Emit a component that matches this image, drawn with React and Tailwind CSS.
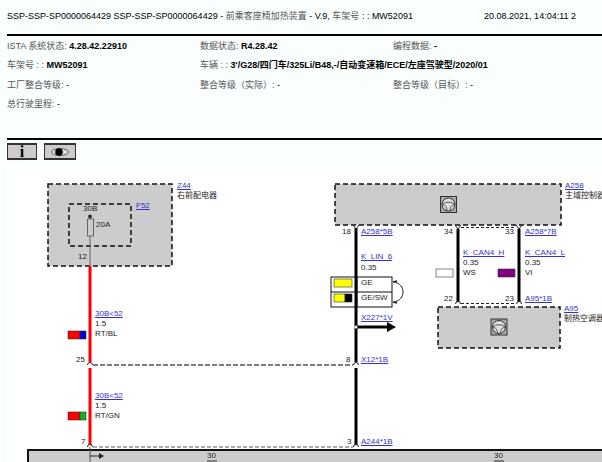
const sans = "font-['Liberation_Sans','Noto_Sans_CJK_SC',sans-serif]"

const Cjk = ({ children }) => <span className="text-[#555]">{children}</span>

const Field = ({ label, value, className = '' }) => (
    <div className={`h-[19.4px] leading-[19px] whitespace-nowrap ${className}`}>
        <Cjk>{label}</Cjk>
        {value}
    </div>
)

// one text of the wiring diagram
const Text = ({ link, children }) => (
    <span className={`text-[8px] leading-none whitespace-nowrap ${link ? 'text-[#3333cc] underline' : 'text-[#222]'}`}>
        {children}
    </span>
)

const Label = ({ className, link, children }) => (
    <div className={`absolute flex ${className}`}>
        <Text link={link}>{children}</Text>
    </div>
)

// wire name, cross-section, colour: always stacked under each other
const Stack = ({ className, link, lines }) => (
    <div className={`absolute flex flex-col items-start gap-[2px] ${className}`}>
        <Text link>{link}</Text>
        {lines.map((line) => (
            <Text key={line}>{line}</Text>
        ))}
    </div>
)

const Steering = ({ x, y }) => (
    <g transform={`translate(${x} ${y})`} fill="none" stroke="#333" strokeWidth="1">
        <rect x="-8" y="-8" width="16" height="16" fill="#aaa" />
        <circle r="6.5" fill="#ddd" />
        <path d="M-6 0 C-3 -3 3 -3 6 0 M-6 0 C-3 1 -2 2 -1.5 6 M6 0 C3 1 2 2 1.5 6" strokeWidth="0.8" />
    </g>
)

const Pin = ({ x, y }) => (
    <path d={`M${x - 2.5} ${y + 1} A2.5 2.5 0 0 1 ${x + 2.5} ${y + 1}`} fill="#fff" stroke="#222" strokeWidth="1" />
)

const Diagram = () => (
    <div className="relative h-[298px] w-[595px] overflow-hidden bg-white">
        <svg className="absolute -left-[7px] top-0" width="602" height="298" viewBox="0 164 602 298">
            <g fill="#ccc" stroke="#111" strokeWidth="1.5" strokeDasharray="5 3">
                <rect x="48" y="184" width="124" height="82" />
                <rect x="335" y="184" width="226" height="41" />
                <rect x="438" y="307" width="122" height="41" />
            </g>
            <rect x="69" y="204" width="62" height="42" fill="none" stroke="#111" strokeWidth="1.5" strokeDasharray="5 3" />
            <path d="M90 217 V266" stroke="#666" strokeWidth="1" />
            <circle cx="90" cy="216.5" r="2" fill="#333" />
            <rect x="87.5" y="219" width="6" height="17" fill="#ccc" stroke="#666" />

            <path d="M90 266 V362 M90 368 V445" stroke="#f00" strokeWidth="3" />
            <path d="M356 228 V362 M356 368 V445 M458 229 V302 M519 229 V302" stroke="#000" strokeWidth="3" />
            <path d="M353 225 L356 229 L359 225 M455 225 L458 229 L461 225 M516 225 L519 229 L522 225" fill="none" stroke="#222" strokeWidth="1" />

            <path d="M93 365 H353" stroke="#000" strokeWidth="1" strokeDasharray="5 2" />
            <path d="M93 447 H353" stroke="#555" strokeWidth="1" strokeDasharray="4 2" />
            <path d="M461 227.5 H516 M461 303.5 H516" stroke="#222" strokeWidth="1" strokeDasharray="3 2" />
            <Pin x={90} y={364} />
            <Pin x={90} y={446} />
            <Pin x={356} y={364} />
            <Pin x={356} y={446} />
            <Pin x={458} y={303} />
            <Pin x={519} y={303} />

            <Steering x={448.5} y={204.5} />
            <Steering x={499} y={327} />

            <g stroke="#333" strokeWidth="0.6">
                <rect x="68" y="331" width="12" height="8" fill="#f00" />
                <rect x="80" y="331" width="6" height="8" fill="#00d" />
                <rect x="68" y="412" width="12" height="8" fill="#f00" />
                <rect x="80" y="412" width="6" height="8" fill="#0b2" />
                <rect x="334" y="279" width="18" height="8" fill="#ff0" />
                <rect x="334" y="294" width="11" height="8" fill="#ff0" />
                <rect x="345" y="294" width="7" height="8" fill="#000" />
                <rect x="436" y="269" width="17" height="8" fill="#fff" />
                <rect x="498" y="269" width="17" height="8" fill="#800080" />
            </g>

            <rect x="331" y="277" width="61" height="30" fill="none" stroke="#111" />
            <path d="M331 292 H392 M357 277 V307" stroke="#111" />
            <path d="M394 282 C406 284 406 300 394 302" fill="none" stroke="#222" />
            <path d="M393 282 L397 281 M393 302 L397 303" stroke="#222" strokeWidth="1.5" />
            <path d="M356 327 H388" stroke="#000" strokeWidth="3" />
            <path d="M387 322 L396 327 L387 332 Z" fill="#000" />
            <circle cx="356" cy="327" r="1.5" fill="#fff" />

            <rect x="28" y="450" width="590" height="30" fill="#ccc" stroke="#111" strokeWidth="2" />
            <path d="M90 447 V462" stroke="#555" />
            <path d="M90 456 H100" stroke="#222" />
            <path d="M99 453 L104 456 L99 459 Z" fill="#222" />
            <path d="M207 461 H217 M494 461 H504" stroke="#333" />
        </svg>

        <Stack className="left-[170px] top-[18px]" link="Z44" lines={['右前配电器']} />
        <Label link className="left-[129px] top-[38px]">F52</Label>
        <Label className="left-[76px] top-[41px]">30B</Label>
        <Label className="left-[89px] top-[57px]">20A</Label>
        <Label className="left-[71px] top-[89px]">12</Label>

        <Stack className="left-[88px] top-[146px]" link="30B<52" lines={['1.5', 'RT/BL']} />
        <Label className="left-[69px] top-[192px]">25</Label>
        <Stack className="left-[88px] top-[228px]" link="30B<52" lines={['1.5', 'RT/GN']} />
        <Label className="left-[74px] top-[274px]">7</Label>

        <Stack className="left-[558px] top-[18px]" link="A258" lines={['主域控制器']} />
        <Label className="left-[335px] top-[64px]">18</Label>
        <Label link className="left-[354px] top-[64px]">A258*5B</Label>
        <Stack className="left-[354px] top-[89px] !gap-[3px]" link="K_LIN_6" lines={['0.35']} />
        <div className="absolute left-[354px] top-[115px] flex flex-col items-start gap-[7px]">
            <Text>GE</Text>
            <Text>GE/SW</Text>
        </div>
        <Label link className="left-[354px] top-[150px]">X227*1V</Label>
        <Label className="left-[339px] top-[192px]">8</Label>
        <Label link className="left-[354px] top-[192px]">X12*1B</Label>
        <Label className="left-[340px] top-[274px]">3</Label>
        <Label link className="left-[354px] top-[274px]">A244*1B</Label>

        <Label className="left-[437px] top-[64px]">34</Label>
        <Label className="left-[498px] top-[64px]">33</Label>
        <Label link className="left-[518px] top-[64px]">A258*7B</Label>
        <Stack className="left-[456px] top-[85px]" link="K_CAN4_H" lines={['0.35', 'WS']} />
        <Stack className="left-[518px] top-[85px]" link="K_CAN4_L" lines={['0.35', 'VI']} />
        <Label className="left-[437px] top-[131px]">22</Label>
        <Label className="left-[498px] top-[131px]">23</Label>
        <Label link className="left-[518px] top-[131px]">A95*1B</Label>
        <Stack className="left-[557px] top-[141px]" link="A95" lines={['制热空调器']} />

        <Label className="left-[200px] top-[288px]">30</Label>
        <Label className="left-[487px] top-[288px]">30</Label>
    </div>
)

export default function App() {
    return (
        <div className={`h-[462px] w-[602px] overflow-hidden bg-[#fafeff] text-[9px] text-black ${sans}`}>
            <div className="ml-[7px] flex h-[36px] justify-between border-b-2 border-black pb-[14px] pr-[26px] pt-[11px] leading-[10px]">
                <span className="whitespace-nowrap">
                    SSP-SSP-SP0000064429 SSP-SSP-SP0000064429 - <Cjk>前乘客座椅加热装置</Cjk> - V.9, <Cjk>车架号</Cjk> : : MW52091
                </span>
                <span className="whitespace-nowrap">20.08.2021, 14:04:11 2</span>
            </div>

            <div className="ml-[7px] grid h-[104px] grid-cols-[193px_193px_1fr] content-start border-b-2 border-black pt-[1px]">
                <Field label="ISTA 系统状态: " value={<b>4.28.42.22910</b>} />
                <Field label="数据状态: " value={<b>R4.28.42</b>} />
                <Field label="编程数据: " value={<b>-</b>} />
                <Field label="车架号 : : " value={<b>MW52091</b>} />
                <Field
                    className="col-span-2"
                    label="车辆 : : "
                    value={<b>3&apos;/G28/四门车/325Li/B48,-/自动变速箱/ECE/左座驾驶型/2020/01</b>}
                />
                <Field label="工厂整合等级: " value="-" />
                <Field label="整合等级（实际）: " value="-" />
                <Field label="整合等级（目标）: " value="-" />
                <Field className="col-span-3" label="总行驶里程: " value="-" />
            </div>

            <div className="ml-[7px] flex h-[24px] items-start gap-[7px] pt-[3px]">
                <div className="flex h-[17px] w-[30px] items-center justify-center border border-t-2 border-b-2 border-[#333] bg-[#ccc] font-['Liberation_Serif',serif] text-[16px] font-bold leading-none">
                    i
                </div>
                <div className="flex h-[17px] w-[32px] items-center justify-center border border-t-2 border-b-2 border-[#333] bg-[#ccc]">
                    <svg width="20" height="10" viewBox="0 0 20 10">
                        <ellipse cx="10" cy="5" rx="8.5" ry="3.5" fill="#ddd" stroke="#333" strokeWidth="0.7" />
                        <circle cx="9" cy="5" r="3.8" fill="#000" />
                    </svg>
                </div>
            </div>

            <div className="ml-[7px]">
                <Diagram />
            </div>
        </div>
    )
}
